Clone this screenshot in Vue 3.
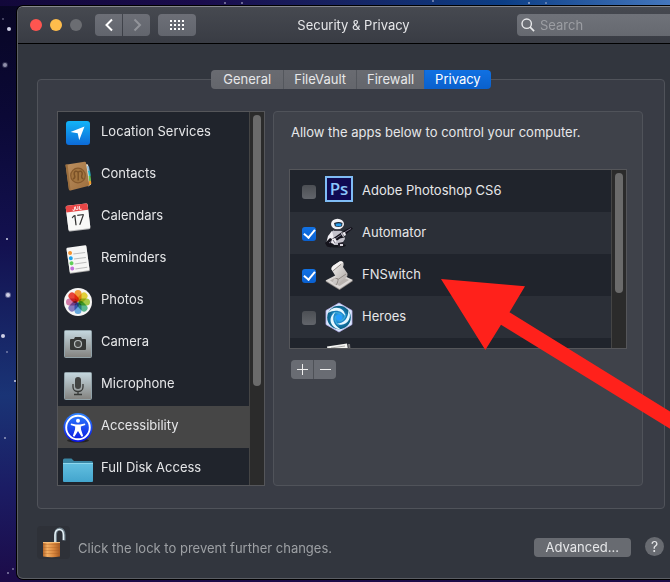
<script setup>
import { ref } from 'vue'

const tabs = ['General', 'FileVault', 'Firewall', 'Privacy']
const activeTab = ref('Privacy')

const services = [
  'Location Services',
  'Contacts',
  'Calendars',
  'Reminders',
  'Photos',
  'Camera',
  'Microphone',
  'Accessibility',
  'Full Disk Access'
]
const activeService = ref('Accessibility')

const apps = ref([
  { id: 'photoshop', name: 'Adobe Photoshop CS6', allowed: false },
  { id: 'automator', name: 'Automator', allowed: true },
  { id: 'fnswitch', name: 'FNSwitch', allowed: true },
  { id: 'heroes', name: 'Heroes', allowed: false }
])

const petals = [
  { angle: 0, color: '#f9a13a' },
  { angle: 45, color: '#e9d83c' },
  { angle: 90, color: '#a9d04a' },
  { angle: 135, color: '#5dbf94' },
  { angle: 180, color: '#6aaee6' },
  { angle: 225, color: '#8a7fc8' },
  { angle: 270, color: '#d97fb0' },
  { angle: 315, color: '#f0483c' }
]

const gridDots = []
for (let row = 0; row < 3; row++) {
  for (let col = 0; col < 4; col++) gridDots.push({ x: col * 4, y: row * 4 })
}
</script>

<template>
  <div class="desktop">
    <svg class="stars" aria-hidden="true">
      <g fill="#cfd0e6">
        <circle cx="9" cy="29" r="2" />
        <circle cx="5" cy="65" r="3" opacity=".2" />
        <circle cx="5" cy="65" r="2" opacity=".6" />
        <circle cx="8" cy="295" r="3" opacity=".4" />
        <circle cx="8" cy="295" r="2" />
        <circle cx="3" cy="336" r="2" />
        <circle cx="7" cy="239" r="1" />
        <circle cx="15" cy="381" r="1" />
        <circle cx="5" cy="438" r="1" opacity=".7" />
        <circle cx="7" cy="352" r="1" opacity=".5" />
        <circle cx="13" cy="569" r="1" opacity=".5" />
        <circle cx="8" cy="573" r="1" opacity=".6" />
        <circle cx="3" cy="19" r="1" opacity=".4" />
        <circle cx="225" cy="3" r="1" opacity=".6" />
        <circle cx="242" cy="3" r="1" opacity=".6" />
        <circle cx="433" cy="1" r="1" opacity=".6" />
        <circle cx="529" cy="3" r="1" opacity=".7" />
        <circle cx="546" cy="3" r="1" opacity=".5" />
      </g>
    </svg>

    <main class="window">
      <header class="titlebar">
        <div class="controls">
          <div class="lights">
            <button class="light close" aria-label="Close"></button>
            <button class="light minimize" aria-label="Minimize"></button>
            <button class="light zoom" aria-label="Zoom" disabled></button>
          </div>
          <div class="history">
            <button class="tool back" aria-label="Back">
              <svg width="10" height="14" viewBox="0 0 10 14"><path d="M8 1.500 2.500 7 8 12.500" fill="none" stroke="#fff" stroke-width="2" /></svg>
            </button>
            <button class="tool forward" aria-label="Forward" disabled>
              <svg width="10" height="14" viewBox="0 0 10 14"><path d="M2.500 1.500 8 7l-5.500 5.500" fill="none" stroke="#92949a" stroke-width="2" /></svg>
            </button>
          </div>
          <button class="tool all" aria-label="Show all">
            <svg width="14" height="10" viewBox="0 0 14 10" fill="#fff">
              <rect v-for="(d, i) in gridDots" :key="i" :x="d.x" :y="d.y" width="2" height="2" />
            </svg>
          </button>
        </div>
        <h1 class="title">Security &amp; Privacy</h1>
        <label class="search">
          <svg width="14" height="14" viewBox="0 0 14 14" fill="none" stroke="#e8e9eb" stroke-width="1.400">
            <circle cx="5.700" cy="5.700" r="4.700" />
            <path d="m9.100 9.100 4 4" stroke-width="1.700" />
          </svg>
          <input type="search" placeholder="Search" aria-label="Search" />
        </label>
      </header>

      <div class="content">
        <nav class="tabs">
          <button
            v-for="tab in tabs"
            :key="tab"
            class="tab"
            :class="{ active: tab === activeTab }"
            @click="activeTab = tab"
          >{{ tab }}</button>
        </nav>

        <section class="group">
          <div class="scrollbox services">
            <ul class="rows">
              <li v-for="service in services" :key="service">
                <button
                  class="service"
                  :class="{ selected: service === activeService }"
                  @click="activeService = service"
                >
                  <svg class="service-icon" width="32" height="32" viewBox="0 0 32 32" aria-hidden="true">
                    <defs>
                      <linearGradient id="loc" x2="0" y2="1"><stop stop-color="#12b4f8" /><stop offset="1" stop-color="#0d6bd8" /></linearGradient>
                      <linearGradient id="metal" x2="0" y2="1"><stop stop-color="#c5d8e0" /><stop offset="1" stop-color="#83827f" /></linearGradient>
                      <linearGradient id="folder" x2="0" y2="1"><stop stop-color="#62bfe0" /><stop offset="1" stop-color="#43a5cd" /></linearGradient>
                      <linearGradient id="acc" x2="0" y2="1"><stop stop-color="#2d83ff" /><stop offset="1" stop-color="#0a12e0" /></linearGradient>
                      <linearGradient id="leather" x2="1" y2="1"><stop stop-color="#bd9060" /><stop offset="1" stop-color="#9c6e3d" /></linearGradient>
                    </defs>
                    <g v-if="service === 'Location Services'">
                      <rect x="4" y="4" width="24" height="24" rx="3" fill="url(#loc)" />
                      <path d="m22.500 9.500-5.300 13.700-1.500-6.900-7.200-1.300z" fill="#fff" />
                    </g>
                    <g v-else-if="service === 'Contacts'">
                      <path d="m23 5 3 .500 3 20-3 2z" fill="#e9e6dc" />
                      <path d="m25 7 2 .400.800 5-2 .300z" fill="#8fb9d8" />
                      <path d="m26 12 2-.300.800 5-2 .300z" fill="#25b5c9" />
                      <path d="m26.500 17 2-.300.600 5-2 .300z" fill="#64bf4c" />
                      <path d="m27 22 2-.300.300 3-3 2z" fill="#ef9a2e" />
                      <path d="M3.500 5.700 22.500 2.800q1.300-.200 1.500 1L27.200 25.500q.200 1.400-1 1.600L8.500 31.500q-1.400.200-1.600-1.200z" fill="url(#leather)" />
                      <path d="m3.500 5.700 3.400 24.800 1.600.800L5.600 5.400z" fill="#9a6d3c" />
                      <circle cx="16" cy="16.500" r="7.300" fill="#a2743f" stroke="#85592d" stroke-width="1.200" />
                      <path d="M11 20q2.500-1 1.600-3.500c-2-4.500 3.400-6 3.600-2 .2-4 5.600-2.500 3.600 2q-.8 2.500 1.600 3.200M16.200 14.500v7" fill="none" stroke="#7b5228" stroke-width="1.500" />
                    </g>
                    <g v-else-if="service === 'Calendars'" transform="rotate(-7 16 16)">
                      <rect x="5" y="4.500" width="22" height="25" rx="1.500" fill="#b9babb" />
                      <rect x="5" y="3.500" width="22" height="25" rx="1.500" fill="#f9f9f8" />
                      <path d="M5 10V5q0-1.500 1.500-1.500h19Q27 3.500 27 5v5z" fill="#e84646" />
                      <text x="16" y="9" class="cal-month">JUL</text>
                      <text x="16" y="24" class="cal-day">17</text>
                    </g>
                    <g v-else-if="service === 'Reminders'" transform="rotate(-8 16 16)">
                      <rect x="6" y="4.500" width="20" height="25" fill="#a9a9a8" />
                      <rect x="6" y="3.500" width="20" height="25" rx="1" fill="#f6f6f5" />
                      <path d="M12 10.500h12M12 15.500h12M12 20.500h12M12 25.500h12" stroke="#bdbdbd" />
                      <circle cx="9" cy="9" r="2" fill="#f59331" />
                      <circle cx="9" cy="14.200" r="2" fill="#1fa3ec" />
                      <circle cx="9" cy="19.400" r="2" fill="#5fcf58" />
                      <circle cx="9" cy="24.600" r="2" fill="#c471dc" />
                    </g>
                    <g v-else-if="service === 'Photos'">
                      <circle cx="16" cy="17" r="14" fill="#f6f5f4" />
                      <rect
                        v-for="p in petals"
                        :key="p.angle"
                        class="petal"
                        x="12.500"
                        y="5"
                        width="7"
                        height="11.500"
                        rx="3.500"
                        :fill="p.color"
                        :transform="`rotate(${p.angle} 16 17)`"
                      />
                    </g>
                    <g v-else-if="service === 'Camera'">
                      <rect x="2.500" y="3.500" width="27" height="27" rx="1" fill="url(#metal)" stroke="#91a2a9" />
                      <path d="M9 12h3l1-2h6l1 2h3q1 0 1 1v9q0 1-1 1H9q-1 0-1-1v-9q0-1 1-1z" fill="#353736" />
                      <circle cx="16" cy="17" r="3.500" fill="#454745" stroke="#b6bcbc" stroke-width="1.200" />
                    </g>
                    <g v-else-if="service === 'Microphone'">
                      <rect x="2.500" y="3.500" width="27" height="27" rx="1" fill="url(#metal)" stroke="#91a2a9" />
                      <rect x="13" y="8" width="6" height="12" rx="3" fill="#414342" />
                      <path d="M11 15v3c0 6 10 6 10 0v-3M16 22.500v3M12 25.500h8" fill="none" stroke="#363837" stroke-width="1.300" />
                    </g>
                    <g v-else-if="service === 'Accessibility'">
                      <ellipse cx="16" cy="29.500" rx="11" ry="2" fill="#252525" />
                      <circle cx="16" cy="16.500" r="14.500" fill="url(#acc)" />
                      <circle cx="16" cy="16.500" r="11.800" fill="none" stroke="#fff" stroke-width="1.900" />
                      <circle cx="16" cy="9.800" r="2" fill="#fff" />
                      <path d="m9 12.500 5 1h4l5-1 .3 1.400-4.500 1.600.2 3 2.200 6.600-1.600.600L16 20l-3.600 5.700-1.600-.6 2.200-6.600.2-3-4.500-1.600z" fill="#fff" />
                    </g>
                    <g v-else>
                      <path d="M1 7q0-1.500 1.500-1.500h7L12 8h17.500Q31 8 31 9.500V14H1z" fill="#3a86a4" />
                      <path d="M1 10.500h30V28q0 1-1 1H2q-1 0-1-1z" fill="url(#folder)" />
                      <path d="M1 10.500h30" stroke="#8ed8ee" />
                    </g>
                  </svg>
                  <span>{{ service }}</span>
                </button>
              </li>
            </ul>
            <div class="track"><div class="thumb long"></div></div>
          </div>

          <section class="panel">
            <p class="hint">Allow the apps below to control your computer.</p>
            <div class="scrollbox apps">
              <ul class="rows striped">
                <li v-for="app in apps" :key="app.id" class="app">
                  <input :id="app.id" v-model="app.allowed" type="checkbox" class="check" />
                  <svg class="app-icon" width="32" height="32" viewBox="0 0 32 32" aria-hidden="true">
                    <defs>
                      <linearGradient id="scroll" x2="1" y2="1"><stop stop-color="#f3f1ef" /><stop offset="1" stop-color="#aaa4a1" /></linearGradient>
                      <radialGradient id="storm"><stop stop-color="#45b8ff" /><stop offset=".5" stop-color="#1680c4" /><stop offset="1" stop-color="#0d5f80" /></radialGradient>
                    </defs>
                    <g v-if="app.id === 'photoshop'">
                      <rect x="3" y="2" width="26" height="24" fill="#100a52" stroke="#7fbcf5" stroke-width="2" />
                      <text x="16" y="20" class="ps">Ps</text>
                    </g>
                    <g v-else-if="app.id === 'automator'">
                      <ellipse cx="14" cy="28.500" rx="9" ry="2" fill="#15171c" />
                      <path d="M8 15q6-4.500 12 0l2 7-4 6h-7l-4-7z" fill="#c3c1ca" />
                      <path d="m9 14-4 5-1.500 6 4 1 3-6z" fill="#f1eff4" />
                      <ellipse cx="14.500" cy="7" rx="6.500" ry="5.300" fill="#f4f3f6" />
                      <path d="M11 6q5-1.800 8.500 0l-.4 3.300q-3.700 1.500-7.200 0z" fill="#202a38" />
                      <path d="M12.500 6.800q3.500-1.200 6 0l-.3 2q-2.700 1-5.400 0z" fill="#299ce8" />
                      <path d="M11 12.300h7v1.700h-7z" fill="#44424c" />
                      <path d="m2 26 5-5 2 1 13-9 6-3 2 1.500-6 5-3 4-4 1-7 5-2 4-4-1z" fill="#14131b" />
                      <path d="m6 26 17-11.500 5-3" stroke="#7a7588" fill="none" />
                      <path d="m9 22 3-1 2 3-3 3-3-1zM18 16l4-1 1 3-3 2z" fill="#efedf2" />
                      <path d="m10 23 2 3M19 16l2 3" stroke="#777380" />
                      <path d="m15 26 5-1 1 3-3 2h-3z" fill="#24212b" />
                      <path d="M17 27h3v2h-3z" fill="#d8d5dc" />
                    </g>
                    <g v-else-if="app.id === 'fnswitch'">
                      <path d="m2.500 22.500 13.500-7 14 6.500-13.500 9z" fill="#918b88" />
                      <path d="M2.500 21.500 16 14.500 30 21l-13.500 9z" fill="#dcd8d6" />
                      <path d="m7 21.500 9-5 10 4.500-9.500 6z" fill="#b9b3af" />
                      <path d="M8.500 10.500q-.5-2.500 2-4l6-4q3-1 4 1.500 .5 2-.5 4l4.500 6.500q.5 2.500-1.500 4l-9 7q-3 1-4-1.500-.5-2 1.500-4l1.500-2z" fill="url(#scroll)" />
                      <path d="M10 6.700 16.500 2.500q3-1 4 1.500-1.500-.500-2.500.500l-8 7q-2-.500-1.500-2.500z" fill="#f6f3f2" />
                      <path d="m10 11.800 8-6.500M12.500 19.500q3-1 2.500 2t-2 4.500M15 20.500l8-5.500" stroke="#857d79" stroke-width=".800" fill="none" />
                    </g>
                    <g v-else>
                      <path d="m16 2 13 7.500v14L16 31 3 23.500v-14z" fill="#dceaff" stroke="#b5aeea" stroke-width=".800" />
                      <circle cx="16" cy="16.500" r="11.800" fill="url(#storm)" />
                      <g v-for="a in [0, 120, 240]" :key="a" :transform="`rotate(${a} 16 16.500)`">
                        <path d="M5 12C9 4 22 5 22.500 16 19 9 12 8 5 12z" fill="#e4f7ff" />
                        <path d="M9.500 12.500q6-2.500 9.500 2" fill="none" stroke="#3aa9d8" stroke-width="1.300" />
                      </g>
                      <circle cx="16" cy="16.500" r="3" fill="#249dff" />
                    </g>
                  </svg>
                  <label :for="app.id">{{ app.name }}</label>
                </li>
                <li class="app peek">
                  <svg class="app-icon" width="32" height="32" viewBox="0 0 32 32" aria-hidden="true">
                    <path d="m4 3.500 20-3L28 25 8 28z" fill="#f4f4f2" />
                    <path d="m8 5 14-2" stroke="#aaa" />
                    <path d="M25 1h2l2 23-1 1z" fill="#77797c" />
                  </svg>
                </li>
              </ul>
              <div class="track"><div class="thumb short"></div></div>
            </div>
            <div class="edit">
              <button aria-label="Add app"><svg width="11" height="11"><path d="M5.500 0v11M0 5.500h11" stroke="#eee" /></svg></button>
              <button aria-label="Remove app"><svg width="11" height="11"><path d="M0 5.500h11" stroke="#eee" /></svg></button>
            </div>
          </section>
        </section>

        <footer class="footer">
          <button class="lock" aria-label="Lock">
            <svg width="33" height="33" viewBox="0 0 33 33">
              <defs>
                <linearGradient id="brass"><stop stop-color="#b86a2b" /><stop offset=".250" stop-color="#f3ae62" /><stop offset=".600" stop-color="#dc8a40" /><stop offset="1" stop-color="#a65a22" /></linearGradient>
              </defs>
              <path d="M18.500 16V9c0-8 8.500-8 8.500 0v5.500" fill="none" stroke="#70808a" stroke-width="3" />
              <path d="M18 16V9c0-7.500 8.500-7.500 8.500 0v5" fill="none" stroke="#e8f3f8" stroke-width="1.500" />
              <path d="M6 16h17v14.500q-8 1.500-17 0z" fill="url(#brass)" />
              <path d="M6 18.500h17M6 21.500h17M6 24.500h17M6 27.500h17" stroke="#a65a22" opacity=".3" />
              <path d="M6 16.500h17" stroke="#f6bd79" />
            </svg>
          </button>
          <p class="lock-text">Click the lock to prevent further changes.</p>
          <button class="advanced">Advanced...</button>
          <button class="help" aria-label="Help">?</button>
        </footer>
      </div>
    </main>

    <svg class="arrow" width="229" height="150" viewBox="441 279 229 150" aria-hidden="true">
      <path d="m441 279 84 7.300-15.500 26L670 411.500v17.200L501 324.700 485.300 350z" fill="#ff211b" />
    </svg>
  </div>
</template>

<style>
body {
  margin: 0;
  background: #17104a;
}
</style>

<style scoped>
* {
  box-sizing: border-box;
}

button,
input {
  font: inherit;
  color: inherit;
  border: 0;
  margin: 0;
  padding: 0;
}

h1,
p,
ul {
  margin: 0;
  padding: 0;
}

.desktop {
  position: relative;
  overflow: hidden;
  min-height: 100vh;
  padding: 6px 0 3px 17px;
  font-family: Inter, "Liberation Sans", sans-serif;
  font-size: 13px;
  line-height: 18px;
  color: #e6e7e9;
  background:
    linear-gradient(90deg, #12083a, #1a0c4c 30%, #172260 50%, #0c3e85 75%, #4477bd) top / 100% 6px no-repeat,
    linear-gradient(#080624, #0b0936 20%, #131150 42%, #1a3476 68%, #1b1c64 84%, #1c0b48);
}

.stars {
  position: absolute;
  inset: 0;
  width: 100%;
  height: 100%;
}

/* The window runs past the right edge of the screen. */
.window {
  position: relative;
  margin-right: -16px;
  border: 1px solid #5b5e64;
  border-top-color: #85878c;
  border-radius: 6px;
  background: #32363e;
  box-shadow: 0 0 0 1px #000;
}

.titlebar {
  display: grid;
  grid-template-columns: 1fr auto 1fr;
  align-items: center;
  height: 37px;
  padding: 0 8px 0 12px;
  border-bottom: 1px solid #000;
  border-radius: 5px 5px 0 0;
  background: linear-gradient(#464950, #393c44);
}

.controls {
  display: flex;
  align-items: center;
}

.lights {
  display: flex;
  gap: 8px;
  margin-right: 13px;
}

.light {
  width: 12px;
  height: 12px;
  border-radius: 50%;
}

.close { background: #ff5550; }
.minimize { background: #ffbd4c; }
.zoom { background: #6b6d72; }

.history {
  display: flex;
  gap: 1px;
  margin-right: 8px;
}

.tool {
  display: flex;
  align-items: center;
  justify-content: center;
  width: 27px;
  height: 22px;
  border-radius: 4px;
  background: linear-gradient(#6d6f77, #62656d);
}

.back { border-radius: 4px 0 0 4px; }
.forward { border-radius: 0 4px 4px 0; }
.all { width: 38px; }

.title {
  font-size: 13px;
  font-weight: 400;
}

.search {
  display: flex;
  align-items: center;
  justify-self: end;
  gap: 5px;
  width: 160px;
  height: 22px;
  padding: 0 4px;
  border-radius: 4px;
  background: linear-gradient(#6f7279, #666970);
}

.search input {
  flex: 1;
  min-width: 0;
  background: none;
  outline: 0;
  appearance: none;
}

.search input::placeholder {
  color: #9c9ea3;
  opacity: 1;
}

.content {
  padding: 26px 20px 19px 19px;
}

.tabs {
  position: relative;
  display: flex;
  width: max-content;
  margin: 0 auto -10px;
  border-radius: 4px;
  overflow: hidden;
}

.tab {
  height: 19px;
  padding: 0 10px;
  border-left: 1px solid #54575d;
  line-height: 19px;
  background: linear-gradient(#696b71, #64666c);
}

.tab:first-child {
  padding: 0 12px;
  border-left: 0;
}

.tab.active {
  border-left-color: #0d63cd;
  color: #fff;
  background: linear-gradient(#1071e3, #0a60cc);
}

.group {
  display: flex;
  gap: 8px;
  padding: 31px 21px 22px 19px;
  border: 1px solid #50535a;
  border-radius: 4px;
  background: #393c45;
}

.scrollbox {
  display: flex;
  overflow: hidden;
  border: 1px solid #55565a;
  background: #20242c;
}

.services {
  flex: none;
  width: 208px;
  height: 375px;
}

.rows {
  flex: 1;
  min-width: 0;
  list-style: none;
}

.service {
  display: flex;
  align-items: center;
  gap: 7px;
  width: 100%;
  height: 42px;
  padding: 0 4px;
  text-align: left;
  background: none;
}

.service span {
  padding-bottom: 5px;
}

.app label {
  padding-bottom: 3px;
}

.service.selected {
  background: #464646;
}

.service-icon,
.app-icon {
  flex: none;
}

.cal-month {
  font-size: 5px;
  font-weight: 700;
  text-anchor: middle;
  fill: #fff;
}

.cal-day {
  font-size: 14px;
  text-anchor: middle;
  fill: #333;
}

.ps {
  font-family: "Open Sans", sans-serif;
  font-size: 17px;
  font-weight: 600;
  text-anchor: middle;
  fill: #8cc8fa;
}

.petal {
  mix-blend-mode: multiply;
}

.track {
  flex: none;
  width: 15px;
  padding: 3px;
  border-left: 1px solid #454545;
  background: #2b2b2b;
}

.thumb {
  width: 8px;
  border-radius: 4px;
  background: #6b6b6b;
}

.long { height: 271px; }
.short { height: 120px; }

.panel {
  flex: 1;
  min-width: 0;
  padding: 11px 15px;
  border: 1px solid #50535a;
  border-radius: 4px;
  background: #3f424a;
}

.hint {
  margin: 0 2px 28px;
  white-space: nowrap;
}

.apps {
  height: 180px;
}

.app {
  display: flex;
  align-items: center;
  height: 42px;
  padding-left: 12px;
}

.striped .app:nth-child(even) {
  background: #2b2f37;
}

.check {
  flex: none;
  width: 14px;
  height: 14px;
  margin: 2px 7px 0 0;
  border-radius: 3px;
  appearance: none;
  background: linear-gradient(#4c4f54, #62656b);
}

.check:checked {
  display: grid;
  place-items: center;
  padding-bottom: 3px;
  background: linear-gradient(#1272e4, #0a60cf);
}

.check:checked::after {
  content: "";
  width: 5px;
  height: 9px;
  border: solid #fff;
  border-width: 0 2px 2px 0;
  transform: rotate(40deg);
}

.app label {
  margin-left: 7px;
}

.peek {
  padding-left: 33px;
}

.edit {
  display: flex;
  gap: 1px;
  width: max-content;
  margin: 11px 2px 0;
  border-radius: 4px;
  overflow: hidden;
  background: #4e5157;
}

.edit button {
  display: flex;
  align-items: center;
  justify-content: center;
  width: 22px;
  height: 19px;
  background: #696c73;
}

.footer {
  display: flex;
  align-items: center;
  margin-top: 17px;
  padding-right: 1px;
}

.lock {
  width: 33px;
  height: 33px;
  border-radius: 4px;
  background: #2e3138;
}

.lock svg {
  display: block;
}

.lock-text {
  flex: 1;
  margin: 10px 0 0 8px;
  color: #9da0a4;
}

.advanced {
  height: 19px;
  margin: 10px 14px 0 0;
  padding: 0 12px;
  border-radius: 4px;
  line-height: 19px;
  background: #686b71;
}

.help {
  width: 19px;
  height: 19px;
  margin-top: 8px;
  border-radius: 50%;
  font-size: 14px;
  line-height: 19px;
  background: #686b71;
}

.arrow {
  position: absolute;
  left: 441px;
  top: 279px;
}
</style>
